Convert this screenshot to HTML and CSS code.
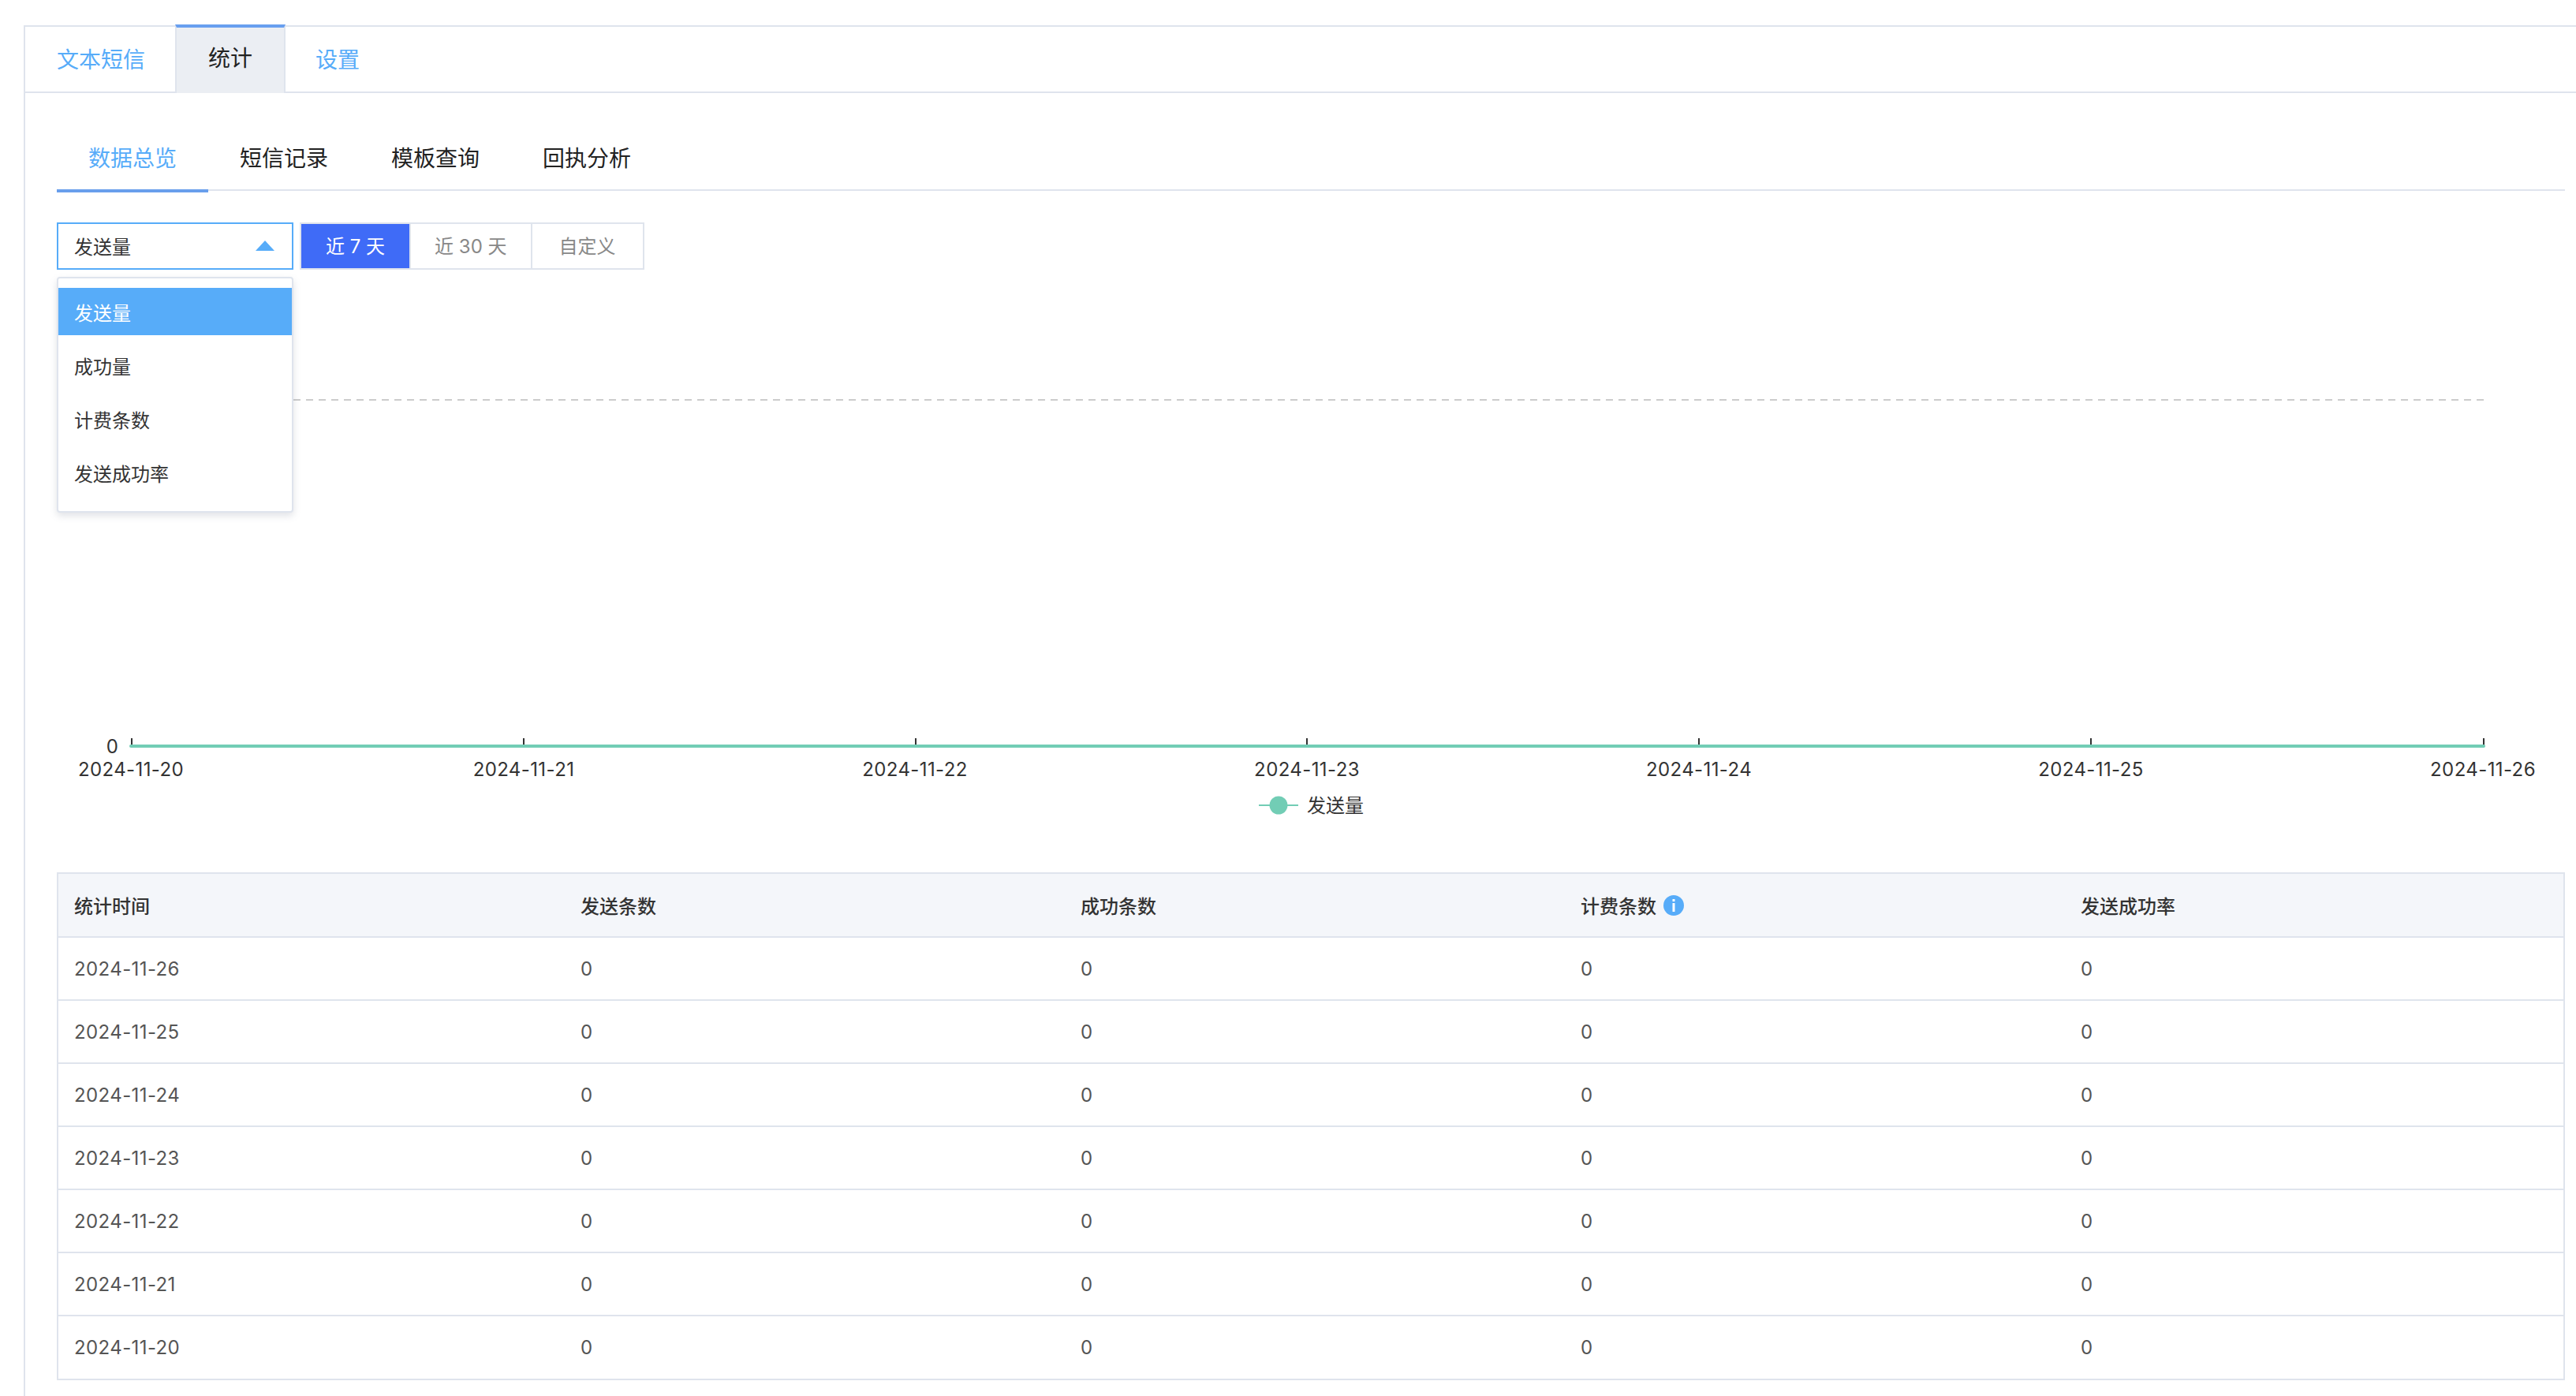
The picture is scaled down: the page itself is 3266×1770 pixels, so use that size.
FILE: index.html
```html
<!DOCTYPE html>
<html lang="zh-CN">
<head>
    <meta charset="UTF-8">
    <meta name="viewport" content="width=device-width, initial-scale=1.0">
    <title>短信统计</title>
    <link rel="stylesheet" href="styles.css">
</head>
<body>
    <div class="panel">
        <div class="main-tabs">
            <a class="main-tab">文本短信</a>
            <a class="main-tab active">统计</a>
            <a class="main-tab">设置</a>
        </div>

        <div class="content">
            <div class="sub-tabs">
                <a class="sub-tab active">数据总览</a>
                <a class="sub-tab">短信记录</a>
                <a class="sub-tab">模板查询</a>
                <a class="sub-tab">回执分析</a>
            </div>

            <div class="filters">
                <div class="select">
                    <div class="select-value">
                        <span>发送量</span>
                        <i class="select-arrow"></i>
                    </div>
                    <ul class="select-menu">
                        <li class="selected">发送量</li>
                        <li>成功量</li>
                        <li>计费条数</li>
                        <li>发送成功率</li>
                    </ul>
                </div>
                <div class="range">
                    <button class="active">近 7 天</button>
                    <button>近 30 天</button>
                    <button>自定义</button>
                </div>
            </div>

            <!-- viewBox uses page coordinates -->
            <svg class="chart" width="3180" height="764" viewBox="72 342 3180 764">
                <line class="grid" x1="372" y1="507" x2="3150" y2="507"></line>
                <g class="ticks">
                    <line x1="167" y1="936" x2="167" y2="945"></line>
                    <line x1="664" y1="936" x2="664" y2="945"></line>
                    <line x1="1161" y1="936" x2="1161" y2="945"></line>
                    <line x1="1657" y1="936" x2="1657" y2="945"></line>
                    <line x1="2154" y1="936" x2="2154" y2="945"></line>
                    <line x1="2651" y1="936" x2="2651" y2="945"></line>
                    <line x1="3149" y1="936" x2="3149" y2="945"></line>
                </g>
                <line class="series" x1="166" y1="946" x2="3149" y2="946"></line>
                <text class="axis-y" x="150" y="955">0</text>
                <g class="axis-x">
                    <text x="166" y="984">2024-11-20</text>
                    <text x="664" y="984">2024-11-21</text>
                    <text x="1160" y="984">2024-11-22</text>
                    <text x="1657" y="984">2024-11-23</text>
                    <text x="2154" y="984">2024-11-24</text>
                    <text x="2651" y="984">2024-11-25</text>
                    <text x="3148" y="984">2024-11-26</text>
                </g>
                <line class="legend-line" x1="1596" y1="1021" x2="1646" y2="1021"></line>
                <circle class="legend-dot" cx="1621" cy="1021" r="11.5"></circle>
                <text class="legend-text" x="1657" y="1030">发送量</text>
            </svg>

            <table class="stats">
                <thead>
                    <tr>
                        <th>统计时间</th>
                        <th>发送条数</th>
                        <th>成功条数</th>
                        <th>
                            <span class="with-icon">计费条数
                                <svg class="info" width="26" height="26" viewBox="0 0 26 26">
                                    <circle cx="13" cy="13" r="13" fill="#57acf9"></circle>
                                    <rect x="11.5" y="5" width="3" height="3" fill="#fff"></rect>
                                    <rect x="11.5" y="10" width="3" height="11" fill="#fff"></rect>
                                </svg>
                            </span>
                        </th>
                        <th>发送成功率</th>
                    </tr>
                </thead>
                <tbody>
                    <tr><td>2024-11-26</td><td>0</td><td>0</td><td>0</td><td>0</td></tr>
                    <tr><td>2024-11-25</td><td>0</td><td>0</td><td>0</td><td>0</td></tr>
                    <tr><td>2024-11-24</td><td>0</td><td>0</td><td>0</td><td>0</td></tr>
                    <tr><td>2024-11-23</td><td>0</td><td>0</td><td>0</td><td>0</td></tr>
                    <tr><td>2024-11-22</td><td>0</td><td>0</td><td>0</td><td>0</td></tr>
                    <tr><td>2024-11-21</td><td>0</td><td>0</td><td>0</td><td>0</td></tr>
                    <tr><td>2024-11-20</td><td>0</td><td>0</td><td>0</td><td>0</td></tr>
                </tbody>
            </table>
        </div>
    </div>
</body>
</html>
```

FILE: styles.css
```css
* {
    box-sizing: border-box;
}

html, body {
    height: 100%;
}

body {
    margin: 0;
    padding: 32px 0 0 30px;
    overflow: hidden;
    background-color: #fff;
    color: #333;
    font-family: Inter, "Noto Sans CJK SC", sans-serif;
    font-size: 24px;
}

.panel {
    height: 100%;
    border-top: 2px solid #dfe4ed;
    border-left: 2px solid #dfe4ed;
}

/* top tabs */
.main-tabs {
    display: flex;
    height: 84px;
    border-bottom: 2px solid #dfe4ed;
}

.main-tab {
    padding: 0 38px 0 40px;
    color: #57acf9;
    font-size: 28px;
    line-height: 84px;
}

.main-tab:last-child {
    padding-left: 38px;
}

.main-tab.active {
    height: 87px;
    margin-top: -3px;
    padding: 0 40px;
    border: 2px solid #dfe4ed;
    border-top: 4px solid #689fef;
    border-bottom: none;
    background-color: #ebeef3;
    color: #222;
    line-height: 78px;
}

.content {
    padding: 42px 14px 0 40px;
}

/* second level tabs */
.sub-tabs {
    display: flex;
    height: 82px;
    border-bottom: 2px solid #dfe4ed;
}

.sub-tab {
    height: 84px;
    padding: 0 40px;
    color: #222;
    font-size: 28px;
    line-height: 82px;
}

.sub-tab.active {
    border-bottom: 4px solid #699fec;
    color: #57acf9;
}

/* filters */
.filters {
    display: flex;
    gap: 8px;
    margin-top: 40px;
}

.select {
    position: relative;
    width: 300px;
}

.select-value {
    display: flex;
    align-items: center;
    justify-content: space-between;
    height: 60px;
    padding: 0 22px 2px 20px;
    border: 2px solid #57acf9;
}

.select-arrow {
    width: 0;
    height: 0;
    border-right: 12px solid transparent;
    border-bottom: 13px solid #57acf9;
    border-left: 12px solid transparent;
}

.select-menu {
    position: absolute;
    top: 69px;
    left: 0;
    z-index: 10;
    width: 300px;
    height: 299px;
    margin: 0;
    padding: 12px 0 0;
    border: 2px solid #dfe4ed;
    border-radius: 4px;
    background-color: #fff;
    box-shadow: 0 4px 10px rgba(100, 110, 130, 0.2);
    list-style: none;
}

.select-menu li {
    height: 60px;
    margin-bottom: 8px;
    padding: 0 20px;
    line-height: 66px;
}

.select-menu li.selected {
    background-color: #57acf9;
    color: #fff;
}

.range {
    display: flex;
    height: 60px;
}

.range button {
    height: 60px;
    margin-left: -2px;
    padding: 0 30px 4px;
    border: 2px solid #dfe4ed;
    background-color: #fff;
    color: #888;
    font-family: inherit;
    font-size: 24px;
}

.range button:first-child {
    margin-left: 0;
    padding: 0 31px 4px;
}

.range button:last-child {
    padding: 0 34px 4px;
}

.range button.active {
    background-color: #3f6bf7;
    color: #fff;
}

/* chart */
.chart {
    display: block;
}

.chart text {
    fill: #333;
    font-size: 24px;
}

.grid {
    stroke: #ccc;
    stroke-width: 2;
    stroke-dasharray: 9 7;
}

.ticks line {
    stroke: #333;
    stroke-width: 2;
}

.series {
    stroke: #72cdb5;
    stroke-width: 4;
    stroke-linecap: round;
}

.chart .axis-y {
    text-anchor: end;
}

.axis-x text {
    letter-spacing: 0.4px;
    text-anchor: middle;
}

.legend-line {
    stroke: #72cdb5;
    stroke-width: 2;
}

.legend-dot {
    fill: #72cdb5;
}

/* table */
.stats {
    width: 3180px;
    border: 2px solid #dfe4ed;
    border-spacing: 0;
    table-layout: fixed;
}

.stats th,
.stats td {
    width: 634px;
    padding: 0 0 0 22px;
    border-bottom: 2px solid #dfe4ed;
    text-align: left;
}

.stats th:first-child,
.stats td:first-child {
    width: 640px;
    padding-left: 20px;
}

.stats td:first-child {
    letter-spacing: 0.4px;
}

.stats th {
    height: 81px;
    background-color: #f4f6fa;
    color: #333;
    font-weight: 500;
}

.stats td {
    height: 80px;
    color: #555;
}

.stats tbody tr:last-child td {
    height: 79px;
    border-bottom: none;
}

.with-icon {
    display: inline-flex;
    align-items: center;
    gap: 9px;
}

.info {
    display: block;
}
```
